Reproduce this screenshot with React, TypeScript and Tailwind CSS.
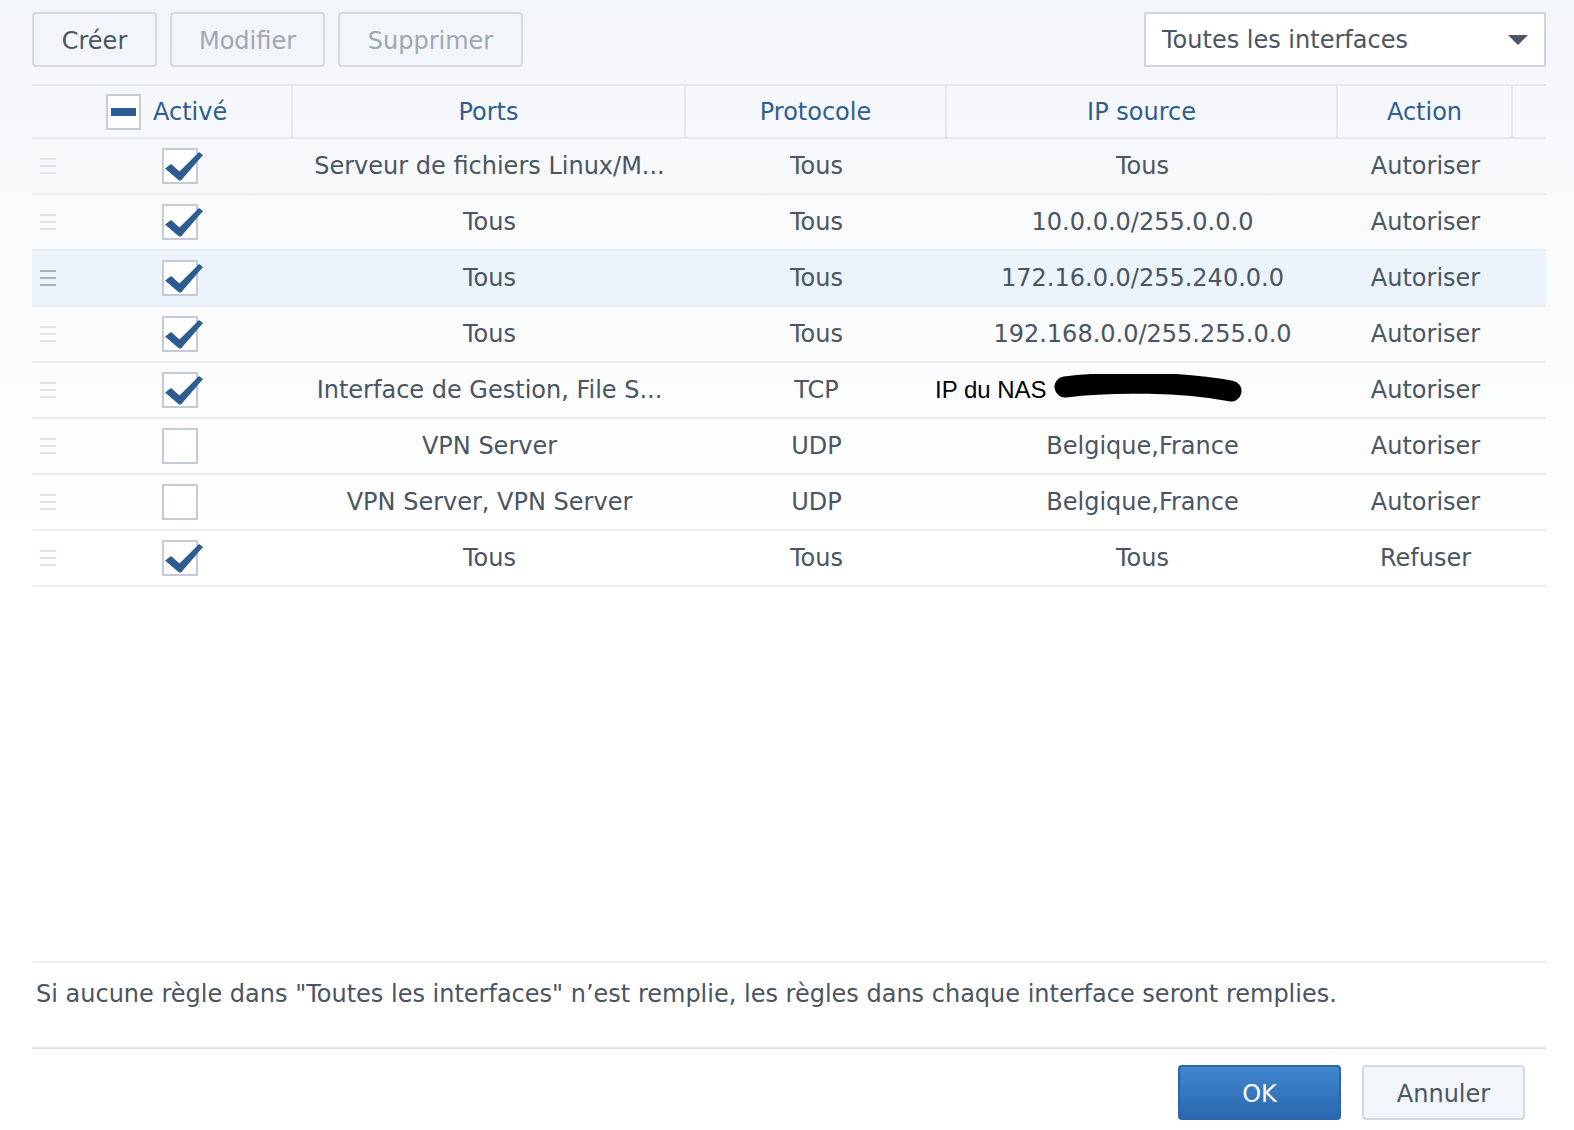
import React from 'react';

type Rule = {
  enabled: boolean;
  ports: string;
  protocol: string;
  source: string;
  action: string;
  highlight?: boolean;
  masked?: boolean;
};

const rules: Rule[] = [
  { enabled: true, ports: 'Serveur de fichiers Linux/M...', protocol: 'Tous', source: 'Tous', action: 'Autoriser' },
  { enabled: true, ports: 'Tous', protocol: 'Tous', source: '10.0.0.0/255.0.0.0', action: 'Autoriser' },
  { enabled: true, ports: 'Tous', protocol: 'Tous', source: '172.16.0.0/255.240.0.0', action: 'Autoriser', highlight: true },
  { enabled: true, ports: 'Tous', protocol: 'Tous', source: '192.168.0.0/255.255.0.0', action: 'Autoriser' },
  { enabled: true, ports: 'Interface de Gestion, File S...', protocol: 'TCP', source: '', action: 'Autoriser', masked: true },
  { enabled: false, ports: 'VPN Server', protocol: 'UDP', source: 'Belgique,France', action: 'Autoriser' },
  { enabled: false, ports: 'VPN Server, VPN Server', protocol: 'UDP', source: 'Belgique,France', action: 'Autoriser' },
  { enabled: true, ports: 'Tous', protocol: 'Tous', source: 'Tous', action: 'Refuser' },
];

const cols = 'grid grid-cols-[261px_393px_261px_391px_175px_1fr]';

const Checkbox: React.FC<{ checked: boolean }> = ({ checked }) => (
  <div className="relative w-[36px] h-[36px] border-2 border-[#c3ccd7] bg-white">
    {checked && (
      <svg className="absolute -left-[2px] -top-[2px] overflow-visible" width="36" height="36" viewBox="0 0 36 36">
        <path d="M3 20.5 L9 16 L17.5 23.5 L37 4 L41 7 L19 32.5 L17 32.5 Z" fill="#2d5c93" />
      </svg>
    )}
  </div>
);

const Handle: React.FC<{ dark?: boolean }> = ({ dark }) => (
  <div className="flex flex-col gap-[5px] w-[16px]">
    <div className={`h-[2px] ${dark ? 'bg-[#a9b2bc]' : 'bg-[#dde3e9]'}`} />
    <div className={`h-[2px] ${dark ? 'bg-[#a9b2bc]' : 'bg-[#dde3e9]'}`} />
    <div className={`h-[2px] ${dark ? 'bg-[#a9b2bc]' : 'bg-[#dde3e9]'}`} />
  </div>
);

const ToolButton: React.FC<{ label: string; w: string; disabled?: boolean }> = ({ label, w, disabled }) => (
  <button
    className={`${w} h-[55px] pt-[3px] rounded-[4px] border-2 border-[#d3dbe3] bg-[#f2f6fa] text-[24px] ${disabled ? 'text-[#9ea8b2]' : 'text-[#4a5562]'}`}
  >
    {label}
  </button>
);

export default function App() {
  return (
    <div
      className="w-[1574px] h-[1130px] bg-gradient-to-b from-[#f3f6f9] via-white to-white flex flex-col text-[#4a5562]"
      style={{ fontFamily: '"DejaVu Sans", Verdana, sans-serif' }}
    >
      <div className="pl-[32px] pr-[28px] pt-[12px] flex justify-between">
        <div className="flex gap-[13px]">
          <ToolButton label="Créer" w="w-[125px]" />
          <ToolButton label="Modifier" w="w-[155px]" disabled />
          <ToolButton label="Supprimer" w="w-[185px]" disabled />
        </div>
        <div className="w-[402px] h-[55px] border-2 border-[#cdd6df] bg-white flex items-center justify-between pl-[16px] pr-[16px]">
          <span className="text-[24px] text-[#4a5562]">Toutes les interfaces</span>
          <svg width="20" height="12" viewBox="0 0 20 12">
            <path d="M0 1 L20 1 L10 11 Z" fill="#4b5563" />
          </svg>
        </div>
      </div>

      <div className="pl-[32px] pr-[28px] mt-[17px] flex-1 flex flex-col">
        <div className={`${cols} h-[55px] border-t-2 border-b-2 border-[#e3e9ef] text-[24px] text-[#2e5d91]`}>
          <div className="flex items-center pl-[74px] gap-[12px] border-r-2 border-[#e3e9ef]">
            <div className="w-[35px] h-[36px] border-2 border-[#c3ccd7] bg-white flex items-center justify-center">
              <div className="w-[25px] h-[8px] bg-[#2d5c93]" />
            </div>
            <span>Activé</span>
          </div>
          <div className="flex items-center justify-center border-r-2 border-[#e3e9ef]">Ports</div>
          <div className="flex items-center justify-center border-r-2 border-[#e3e9ef]">Protocole</div>
          <div className="flex items-center justify-center border-r-2 border-[#e3e9ef]">IP source</div>
          <div className="flex items-center justify-center border-r-2 border-[#e3e9ef]">Action</div>
          <div />
        </div>

        {rules.map((r, i) => (
          <div
            key={i}
            className={`${cols} h-[56px] border-b-2 border-[#e8edf2] text-[24px] ${r.highlight ? 'bg-[#ebf4fd]' : ''}`}
          >
            <div className="flex items-center pl-[8px]">
              <Handle dark={r.highlight} />
              <div className="ml-[106px]">
                <Checkbox checked={r.enabled} />
              </div>
            </div>
            <div className="flex items-center justify-center">{r.ports}</div>
            <div className="flex items-center justify-center">{r.protocol}</div>
            {r.masked ? (
              <div className="flex items-center -ml-[12px]">
                <span className="text-[24px] text-black" style={{ fontFamily: '"Liberation Sans", Arial, sans-serif' }}>
                  IP du NAS
                </span>
                <svg className="ml-[6px]" width="192" height="32" viewBox="0 0 192 32">
                  <path d="M12 13 C 60 7, 130 8, 178 17" stroke="#000" strokeWidth="21" strokeLinecap="round" fill="none" />
                </svg>
              </div>
            ) : (
              <div className="flex items-center justify-center">{r.source}</div>
            )}
            <div className="flex items-center justify-center">{r.action}</div>
            <div />
          </div>
        ))}

        <div className="flex-1" />

        <div className="border-t-2 border-[#e8edf2] h-[85px] pl-[4px] pt-[15px] text-[24px] leading-[32px]">
          Si aucune règle dans "Toutes les interfaces" n’est remplie, les règles dans chaque interface seront remplies.
        </div>
        <div className="h-[3px] bg-gradient-to-b from-[#f2f4f6] to-[#d6dadf]" />
        <div className="h-[81px] flex justify-end items-start pt-[16px] pr-[21px] gap-[21px]">
          <button className="w-[163px] h-[55px] pt-[3px] rounded-[4px] border-2 border-[#2c66aa] bg-gradient-to-b from-[#4087cf] to-[#2a67b0] text-white text-[24px]">
            OK
          </button>
          <button className="w-[163px] h-[55px] pt-[3px] rounded-[4px] border-2 border-[#d3dbe3] bg-[#f2f6fa] text-[#4a5562] text-[24px]">
            Annuler
          </button>
        </div>
      </div>
    </div>
  );
}
